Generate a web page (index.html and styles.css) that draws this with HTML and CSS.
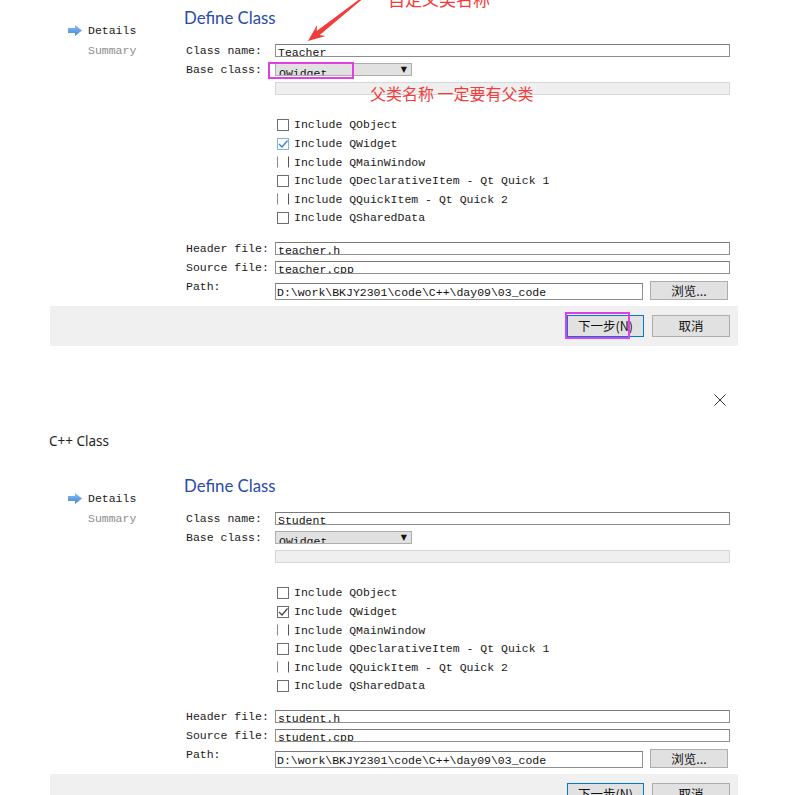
FILE: index.html
```html
<!DOCTYPE html>
<html lang="zh-CN">
<head>
<meta charset="utf-8">
<title>C++ Class</title>
<link rel="stylesheet" href="styles.css">
</head>
<body>
<section class="shot shot-first">
  <div class="titlebar">
    <svg class="close" viewBox="0 0 12 12"><path d="M0.5 0.5 L11.5 11.5 M11.5 0.5 L0.5 11.5" stroke="#333" stroke-width="1" fill="none"/></svg>
  </div>
  <div class="caption">C++ Class</div>
  <div class="body">
    <nav class="sidebar">
      <div class="step"><svg class="step-icon" viewBox="0 0 14 11"><defs><linearGradient id="ga" x1="0" y1="0" x2="0" y2="1"><stop offset="0" stop-color="#8cc0f0"/><stop offset="1" stop-color="#3f86d6"/></linearGradient></defs><polygon points="0,3 7,3 7,0 14,5.5 7,11 7,8 0,8" fill="url(#ga)"/></svg><span>Details</span></div>
      <div class="step step-muted">Summary</div>
    </nav>
    <div class="main">
      <h1 class="heading">Define Class</h1>
      <div class="form">
        <label class="label">Class name:</label>
        <div class="field"><span class="textbox">Teacher</span></div>
        <label class="label">Base class:</label>
        <div class="field"><span class="combo"><span class="combo-text">QWidget</span><span class="combo-arrow">▼</span></span></div>
        <span class="label"></span>
        <div class="field"><span class="textbox textbox-disabled"></span></div>
      </div>
      <ul class="checks">
        <li class="check"><span class="box"></span>Include QObject</li>
        <li class="check"><span class="box box-checked-blue"><svg viewBox="0 0 12 12"><path d="M2 6 L5 9 L10.5 2.5" stroke="#3d82d4" stroke-width="1.3" fill="none"/></svg></span>Include QWidget</li>
        <li class="check"><span class="box box-sides"></span>Include QMainWindow</li>
        <li class="check"><span class="box"></span>Include QDeclarativeItem - Qt Quick 1</li>
        <li class="check"><span class="box box-sides"></span>Include QQuickItem - Qt Quick 2</li>
        <li class="check"><span class="box"></span>Include QSharedData</li>
      </ul>
      <div class="form form-files">
        <label class="label">Header file:</label>
        <div class="field"><span class="textbox">teacher.h</span></div>
        <label class="label">Source file:</label>
        <div class="field"><span class="textbox">teacher.cpp</span></div>
      </div>
      <div class="path-row">
        <label class="label path-label">Path:</label>
        <span class="textbox path-box">D:\work\BKJY2301\code\C++\day09\03_code</span>
        <button class="btn btn-browse">浏览...</button>
      </div>
    </div>
  </div>
  <div class="footer">
    <button class="btn btn-default">下一步(N)</button>
    <button class="btn">取消</button>
  </div>

  <div class="note note-top">自定义类名称</div>
  <svg class="arrow" viewBox="290 -10 90 60"><polygon points="308,41 325.7,36 319.7,35 365.4,-3.4 364.6,-4.6 316.7,31 317.1,25" fill="#f23c3c"/></svg>
  <div class="mark mark-base"></div>
  <div class="note note-base">父类名称 一定要有父类</div>
  <div class="mark mark-next"></div>
</section>

<section class="shot shot-second">
  <div class="titlebar">
    <svg class="close" viewBox="0 0 12 12"><path d="M0.5 0.5 L11.5 11.5 M11.5 0.5 L0.5 11.5" stroke="#333" stroke-width="1" fill="none"/></svg>
  </div>
  <div class="caption">C++ Class</div>
  <div class="body">
    <nav class="sidebar">
      <div class="step"><svg class="step-icon" viewBox="0 0 14 11"><defs><linearGradient id="gb" x1="0" y1="0" x2="0" y2="1"><stop offset="0" stop-color="#8cc0f0"/><stop offset="1" stop-color="#3f86d6"/></linearGradient></defs><polygon points="0,3 7,3 7,0 14,5.5 7,11 7,8 0,8" fill="url(#gb)"/></svg><span>Details</span></div>
      <div class="step step-muted">Summary</div>
    </nav>
    <div class="main">
      <h1 class="heading">Define Class</h1>
      <div class="form">
        <label class="label">Class name:</label>
        <div class="field"><span class="textbox">Student</span></div>
        <label class="label">Base class:</label>
        <div class="field"><span class="combo"><span class="combo-text">QWidget</span><span class="combo-arrow">▼</span></span></div>
        <span class="label"></span>
        <div class="field"><span class="textbox textbox-disabled"></span></div>
      </div>
      <ul class="checks">
        <li class="check"><span class="box"></span>Include QObject</li>
        <li class="check"><span class="box"><svg viewBox="0 0 12 12"><path d="M2 6 L5 9 L10.5 2.5" stroke="#444" stroke-width="1.2" fill="none"/></svg></span>Include QWidget</li>
        <li class="check"><span class="box box-sides"></span>Include QMainWindow</li>
        <li class="check"><span class="box"></span>Include QDeclarativeItem - Qt Quick 1</li>
        <li class="check"><span class="box box-sides"></span>Include QQuickItem - Qt Quick 2</li>
        <li class="check"><span class="box"></span>Include QSharedData</li>
      </ul>
      <div class="form form-files">
        <label class="label">Header file:</label>
        <div class="field"><span class="textbox">student.h</span></div>
        <label class="label">Source file:</label>
        <div class="field"><span class="textbox">student.cpp</span></div>
      </div>
      <div class="path-row">
        <label class="label path-label">Path:</label>
        <span class="textbox path-box">D:\work\BKJY2301\code\C++\day09\03_code</span>
        <button class="btn btn-browse">浏览...</button>
      </div>
    </div>
  </div>
  <div class="footer">
    <button class="btn btn-default">下一步(N)</button>
    <button class="btn">取消</button>
  </div>
</section>
</body>
</html>
```

FILE: styles.css
```css
* { box-sizing: border-box; }

html, body {
  margin: 0;
  padding: 0;
  background: #ffffff;
}

body {
  width: 795px;
  height: 795px;
  overflow: hidden;
  font-family: "Liberation Mono", "DejaVu Sans Mono", monospace;
  font-size: 11.5px;
  color: #1a1a1a;
}

.shot {
  position: relative;
  width: 795px;
  height: 434px;
}

.shot-first { margin-top: -88px; }
.shot-second { margin-top: 34px; }

.titlebar {
  height: 40px;
  display: flex;
  justify-content: flex-end;
  align-items: center;
  padding-right: 69px;
}

.close { width: 12px; height: 12px; display: block; }

.caption {
  height: 42px;
  line-height: 42px;
  padding-left: 49px;
  font-family: "Noto Sans", "Open Sans", sans-serif;
  font-size: 13.5px;
  color: #222;
}

.body {
  display: flex;
  height: 312px;
}

.sidebar {
  width: 184px;
  flex: none;
  padding: 26px 0 0 68px;
}

.step {
  display: flex;
  align-items: center;
  gap: 6px;
  height: 20px;
  color: #1a1a1a;
}

.step-icon { width: 14px; height: 11px; display: block; }

.step-muted {
  color: #8c8c8c;
  padding-left: 20px;
}

.main {
  flex: 1;
  padding-left: 2px;
}

.heading {
  margin: 0 0 0 -2px;
  height: 47px;
  padding-top: 12px;
  line-height: 24px;
  font-family: Lato, "Noto Sans", sans-serif;
  font-weight: 400;
  font-size: 16.8px;
  color: #2a4ca8;
}

.form {
  display: grid;
  grid-template-columns: 89px 455px;
  grid-auto-rows: 19px;
  align-items: center;
}

.form-files { margin-top: 12.2px; }

.label {
  line-height: 19px;
  white-space: pre;
}

.field { display: flex; align-items: center; }

.textbox {
  display: block;
  width: 100%;
  height: 13px;
  border: 1px solid #8e8e8e;
  border-top-color: #7a7a7a;
  background: #fff;
  padding: 0 0 0 2px;
  line-height: 15px;
  overflow: hidden;
  white-space: pre;
  color: #111;
}

.textbox-disabled {
  background: #efefef;
  border-color: #d6d6d6;
}

.combo {
  position: relative;
  display: block;
  width: 137px;
  height: 13px;
  background: #e1e1e1;
  border: 1px solid #adadad;
  overflow: hidden;
}

.combo-text {
  display: block;
  padding: 4px 0 0 3px;
  line-height: 12px;
  color: #111;
}

.combo-arrow {
  position: absolute;
  right: 4px;
  top: 0;
  font-size: 8px;
  line-height: 11px;
  color: #111;
  font-family: "DejaVu Sans", sans-serif;
}

.checks {
  list-style: none;
  margin: 17.7px 0 0 89px;
  padding: 0 0 0 2px;
}

.check {
  display: flex;
  align-items: center;
  height: 18.6px;
  gap: 5px;
}

.box {
  width: 12px;
  height: 12px;
  flex: none;
  border: 1px solid #6e6e6e;
  background: #fff;
  position: relative;
}

.box svg {
  position: absolute;
  left: -1px;
  top: -1px;
  width: 12px;
  height: 12px;
}

.box-sides {
  border-top-color: transparent;
  border-bottom-color: transparent;
  border-left-color: #8a8a8a;
  border-right-color: #555;
}

.box-checked-blue { border-color: #7fb3e6; }

.path-row {
  display: flex;
  align-items: flex-start;
  height: 24.5px;
}

.path-label {
  width: 89px;
  flex: none;
}

.path-box {
  width: 368px;
  height: 17px;
  margin-top: 5.5px;
  line-height: 18px;
  padding-left: 1px;
  flex: none;
}

.btn {
  font-family: "Noto Sans CJK SC", "Noto Sans", sans-serif;
  font-size: 12.5px;
  color: #111;
  background: #e1e1e1;
  border: 1px solid #adadad;
  height: 22px;
  width: 78px;
  padding: 0;
  line-height: 20px;
  text-align: center;
}

.btn-browse {
  margin-left: 7px;
  margin-top: 3.5px;
  height: 19px;
  line-height: 17px;
}

.btn-default {
  width: 77px;
  border-color: #0078d7;
}

.footer {
  margin-left: 50px;
  width: 688px;
  height: 40px;
  background: #f0f0f0;
  display: flex;
  justify-content: flex-end;
  gap: 8px;
  padding: 9px 8px 0 0;
}

/* annotations drawn over the screenshot */
.note {
  position: absolute;
  font-family: "Noto Sans CJK SC", sans-serif;
  color: #f23c3c;
  white-space: pre;
}

.note-top {
  left: 388px;
  top: 75px;
  font-size: 17px;
  line-height: 24px;
}

.note-base {
  left: 370px;
  top: 170px;
  font-size: 16px;
  line-height: 22px;
}

.arrow {
  position: absolute;
  left: 290px;
  top: 78px;
  width: 90px;
  height: 60px;
}

.mark {
  position: absolute;
  border: 2px solid #e23fe2;
}

.mark-base {
  left: 268px;
  top: 150px;
  width: 86px;
  height: 17px;
}

.mark-next {
  left: 565px;
  top: 400px;
  width: 65px;
  height: 27px;
}
```
